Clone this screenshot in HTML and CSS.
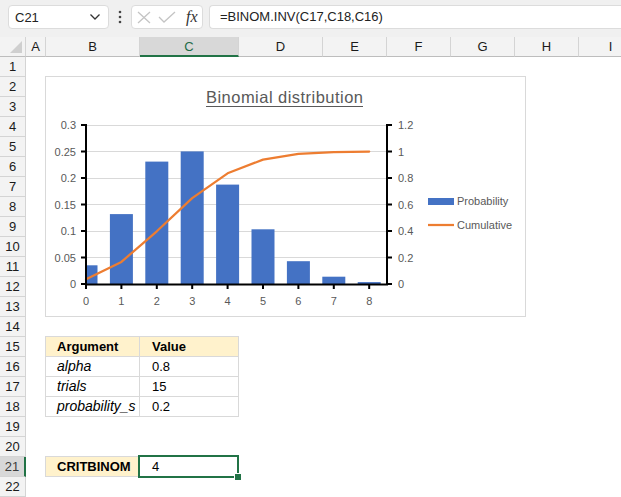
FILE: index.html
```html
<!DOCTYPE html>
<html>
<head>
<meta charset="utf-8">
<link rel="stylesheet" href="styles.css">
</head>
<body>
<div class="app">
  <div class="fbar">
    <div class="namebox">
      <span>C21</span>
      <svg class="chev" width="12" height="8" viewBox="0 0 12 8"><path d="M1.5 1.5 L6 6 L10.5 1.5" fill="none" stroke="#333" stroke-width="1.3"/></svg>
    </div>
    <svg class="kebab" width="6" height="16" viewBox="0 0 6 16"><circle cx="3" cy="3" r="1.3" fill="#444"/><circle cx="3" cy="8" r="1.3" fill="#444"/><circle cx="3" cy="13" r="1.3" fill="#444"/></svg>
    <div class="fxbox">
      <svg width="14" height="13" viewBox="0 0 14 13"><path d="M1 1 L13 12 M13 1 L1 12" stroke="#c4c4c4" stroke-width="1.3" fill="none"/></svg>
      <svg width="18" height="12" viewBox="0 0 18 12"><path d="M1 6 L6 11 L17 1" stroke="#c4c4c4" stroke-width="1.3" fill="none"/></svg>
      <span class="fx">fx</span>
    </div>
    <div class="formula">=BINOM.INV(C17,C18,C16)</div>
  </div>

  <div class="colhdr">
    <div class="corner"><svg width="14" height="12" viewBox="0 0 14 12"><path d="M13 0 L13 12 L1 12 Z" fill="#cfcfcf"/></svg></div>
    <div class="ch w-a">A</div>
    <div class="ch w-b">B</div>
    <div class="ch w-c sel">C</div>
    <div class="ch w-d">D</div>
    <div class="ch w-e">E</div>
    <div class="ch w-e">F</div>
    <div class="ch w-e">G</div>
    <div class="ch w-e">H</div>
    <div class="ch w-e">I</div>
  </div>

  <div class="rows">
    <div class="row"><div class="rh">1</div></div>
    <div class="row"><div class="rh">2</div></div>
    <div class="row"><div class="rh">3</div></div>
    <div class="row"><div class="rh">4</div></div>
    <div class="row"><div class="rh">5</div></div>
    <div class="row"><div class="rh">6</div></div>
    <div class="row"><div class="rh">7</div></div>
    <div class="row"><div class="rh">8</div></div>
    <div class="row"><div class="rh">9</div></div>
    <div class="row"><div class="rh">10</div></div>
    <div class="row"><div class="rh">11</div></div>
    <div class="row"><div class="rh">12</div></div>
    <div class="row"><div class="rh">13</div></div>
    <div class="row"><div class="rh">14</div></div>
    <div class="row"><div class="rh">15</div><div class="sp"></div><div class="cell cb head">Argument</div><div class="cell cc head">Value</div></div>
    <div class="row"><div class="rh">16</div><div class="sp"></div><div class="cell cb it">alpha</div><div class="cell cc">0.8</div></div>
    <div class="row"><div class="rh">17</div><div class="sp"></div><div class="cell cb it">trials</div><div class="cell cc">15</div></div>
    <div class="row"><div class="rh">18</div><div class="sp"></div><div class="cell cb it">probability_s</div><div class="cell cc">0.2</div></div>
    <div class="row"><div class="rh">19</div></div>
    <div class="row"><div class="rh">20</div></div>
    <div class="row"><div class="rh rsel">21</div><div class="sp"></div><div class="cell cb head">CRITBINOM</div><div class="cell active">4<span class="handle"></span></div></div>
    <div class="row"><div class="rh">22</div></div>
  </div>

  <div class="chart">
    <svg width="479" height="239" viewBox="0 0 479 239" font-family="Liberation Sans, Arial, sans-serif">
      <g transform="translate(-46 -77)">
        <text x="284.5" y="103" font-size="16.5" fill="#595959" text-anchor="middle" textLength="157" lengthAdjust="spacing">Binomial distribution</text>
        <line x1="206" y1="106.5" x2="363" y2="106.5" stroke="#595959" stroke-width="1"/>

        <g stroke="#d9d9d9" stroke-width="1">
          <line x1="86" y1="125.5" x2="387" y2="125.5"/>
          <line x1="86" y1="151.5" x2="387" y2="151.5"/>
          <line x1="86" y1="178.5" x2="387" y2="178.5"/>
          <line x1="86" y1="204.5" x2="387" y2="204.5"/>
          <line x1="86" y1="231.5" x2="387" y2="231.5"/>
          <line x1="86" y1="257.5" x2="387" y2="257.5"/>
        </g>

        <g fill="#4472c4">
          <rect x="86" y="265.3" width="11.5" height="18.7"/>
          <rect x="109.9" y="214.1" width="23" height="69.9"/>
          <rect x="145.3" y="161.6" width="23" height="122.4"/>
          <rect x="180.7" y="151.4" width="23" height="132.6"/>
          <rect x="216.1" y="184.6" width="23" height="99.4"/>
          <rect x="251.5" y="229.3" width="23" height="54.7"/>
          <rect x="286.9" y="261.2" width="23" height="22.8"/>
          <rect x="322.3" y="276.7" width="23" height="7.3"/>
          <rect x="357.7" y="282.1" width="23" height="1.9"/>
        </g>

        <polyline points="86,279.3 121.4,261.9 156.8,231.3 192.2,198.1 227.6,173.3 263,159.6 298.4,153.9 333.8,152.1 369.2,151.6" fill="none" stroke="#ed7d31" stroke-width="2.25" stroke-linejoin="round" stroke-linecap="round"/>

        <g stroke="#000" stroke-width="2">
          <line x1="86" y1="124" x2="86" y2="289"/>
          <line x1="85" y1="284.5" x2="388" y2="284.5"/>
          <line x1="387" y1="124" x2="387" y2="285"/>
          <path d="M81 125 H86 M81 151.5 H86 M81 178 H86 M81 204.5 H86 M81 231 H86 M81 257.5 H86 M81 284 H86"/>
          <path d="M387 125 H392 M387 151.5 H392 M387 178 H392 M387 204.5 H392 M387 231 H392 M387 257.5 H392 M387 284 H392"/>
          <path d="M121.4 284 V289 M156.8 284 V289 M192.2 284 V289 M227.6 284 V289 M263 284 V289 M298.4 284 V289 M333.8 284 V289 M369.2 284 V289"/>
        </g>

        <g font-size="11" fill="#595959" text-anchor="end">
          <text x="76" y="129">0.3</text>
          <text x="76" y="155.5">0.25</text>
          <text x="76" y="182">0.2</text>
          <text x="76" y="208.5">0.15</text>
          <text x="76" y="235">0.1</text>
          <text x="76" y="261.5">0.05</text>
          <text x="76" y="288">0</text>
        </g>
        <g font-size="11" fill="#595959">
          <text x="398" y="129">1.2</text>
          <text x="398" y="155.5">1</text>
          <text x="398" y="182">0.8</text>
          <text x="398" y="208.5">0.6</text>
          <text x="398" y="235">0.4</text>
          <text x="398" y="261.5">0.2</text>
          <text x="398" y="288">0</text>
        </g>
        <g font-size="11" fill="#595959" text-anchor="middle">
          <text x="86" y="305">0</text>
          <text x="121.4" y="305">1</text>
          <text x="156.8" y="305">2</text>
          <text x="192.2" y="305">3</text>
          <text x="227.6" y="305">4</text>
          <text x="263" y="305">5</text>
          <text x="298.4" y="305">6</text>
          <text x="333.8" y="305">7</text>
          <text x="369.2" y="305">8</text>
        </g>

        <rect x="428" y="198" width="26" height="7" fill="#4472c4"/>
        <text x="457" y="205" font-size="11" fill="#595959">Probability</text>
        <line x1="428" y1="225" x2="454" y2="225" stroke="#ed7d31" stroke-width="2.25"/>
        <text x="457" y="229" font-size="11" fill="#595959">Cumulative</text>
      </g>
    </svg>
  </div>
</div>
</body>
</html>
```

FILE: styles.css
```css
* { box-sizing: border-box; }
html, body { margin: 0; padding: 0; background: #fff; }
body { font-family: "Liberation Sans", Arial, sans-serif; font-size: 13px; color: #000; overflow: hidden; }

.app { position: relative; width: 621px; height: 497px; overflow: hidden; }

/* formula bar */
.fbar {
  height: 37px;
  background: #f0f0f0;
  display: flex;
  align-items: flex-start;
  padding: 5px 0 0 8px;
}
.namebox {
  flex: none;
  width: 101px; height: 24px;
  background: #fff;
  border: 1px solid #dcdcdc;
  border-radius: 4px;
  display: flex; align-items: center; justify-content: space-between;
  padding: 0 7px 0 6px;
  font-size: 13px; color: #222;
}
.chev { display: block; }
.kebab { flex: none; display: block; margin: 4px 0 0 8px; }
.fxbox {
  flex: none;
  margin-left: 8px;
  width: 72px; height: 24px;
  background: #fff;
  border: 1px solid #dcdcdc;
  border-radius: 4px;
  display: flex; align-items: center;
  padding: 0 0 0 5px;
  gap: 7px;
}
.fxbox svg { display: block; }
.fx { font-family: "Liberation Serif", serif; font-style: italic; font-size: 16px; color: #333; margin-left: 3px; }
.formula {
  margin-left: 6px;
  flex: 1;
  height: 24px;
  background: #fff;
  border: 1px solid #dcdcdc;
  border-right: none;
  border-radius: 4px 0 0 4px;
  padding-left: 10px;
  line-height: 22px;
  font-size: 13px; color: #222;
  white-space: nowrap;
}

/* column headers */
.colhdr { display: flex; height: 20px; background: #f3f3f3; }
.corner {
  flex: none;
  width: 26px; height: 20px;
  border-right: 1px solid #d4d4d4;
  border-bottom: 1px solid #bdbdbd;
  display: flex; align-items: flex-end; justify-content: flex-end;
  padding: 0 2px 3px 0;
}
.corner svg { display: block; }
.ch {
  flex: none;
  height: 20px;
  border-right: 1px solid #d4d4d4;
  border-bottom: 1px solid #bdbdbd;
  text-align: center;
  line-height: 19px;
  font-size: 13px; color: #1a1a1a;
}
.w-a { width: 20px; }
.w-b { width: 94px; }
.w-c { width: 99px; }
.w-d { width: 84px; }
.w-e { width: 64px; }
.ch.sel { background: #d8d8d8; border-bottom: 2px solid #217346; color: #1e6b47; }

/* rows */
.row { display: flex; height: 20px; align-items: flex-start; }
.rh {
  flex: none;
  width: 26px; height: 20px;
  background: #f3f3f3;
  border-right: 1px solid #d4d4d4;
  border-bottom: 1px solid #d4d4d4;
  text-align: center;
  line-height: 19px;
  font-size: 13px; color: #1a1a1a;
}
.rh.rsel { background: #d8d8d8; border-right: 2px solid #217346; color: #3c3c3c; }
.sp { flex: none; width: 20px; }

.cell {
  flex: none;
  height: 21px;
  margin-top: -1px;
  margin-left: -1px;
  border: 1px solid #d9d9d9;
  line-height: 19px;
  font-size: 13px;
  white-space: nowrap;
  overflow: hidden;
}
.cb { width: 95px; padding-left: 11px; }
.cc { width: 100px; padding-left: 12px; }
.head { background: #fff2cc; font-weight: bold; }
.it { font-style: italic; font-size: 14px; }

.active {
  position: relative;
  overflow: visible;
  width: 101px; height: 23px;
  margin-top: -2px;
  margin-left: -2px;
  border: 2px solid #217346;
  padding-left: 12px;
  line-height: 19px;
  background: #fff;
}
.handle {
  position: absolute;
  right: -5px; bottom: -5px;
  width: 8px; height: 8px;
  background: #217346;
  border: 1px solid #fff;
}

/* chart (floating object over the grid) */
.chart {
  position: absolute;
  left: 45px; top: 76px;
  width: 481px; height: 241px;
  background: #fff;
  border: 1px solid #d9d9d9;
}
.chart svg { display: block; }
```
